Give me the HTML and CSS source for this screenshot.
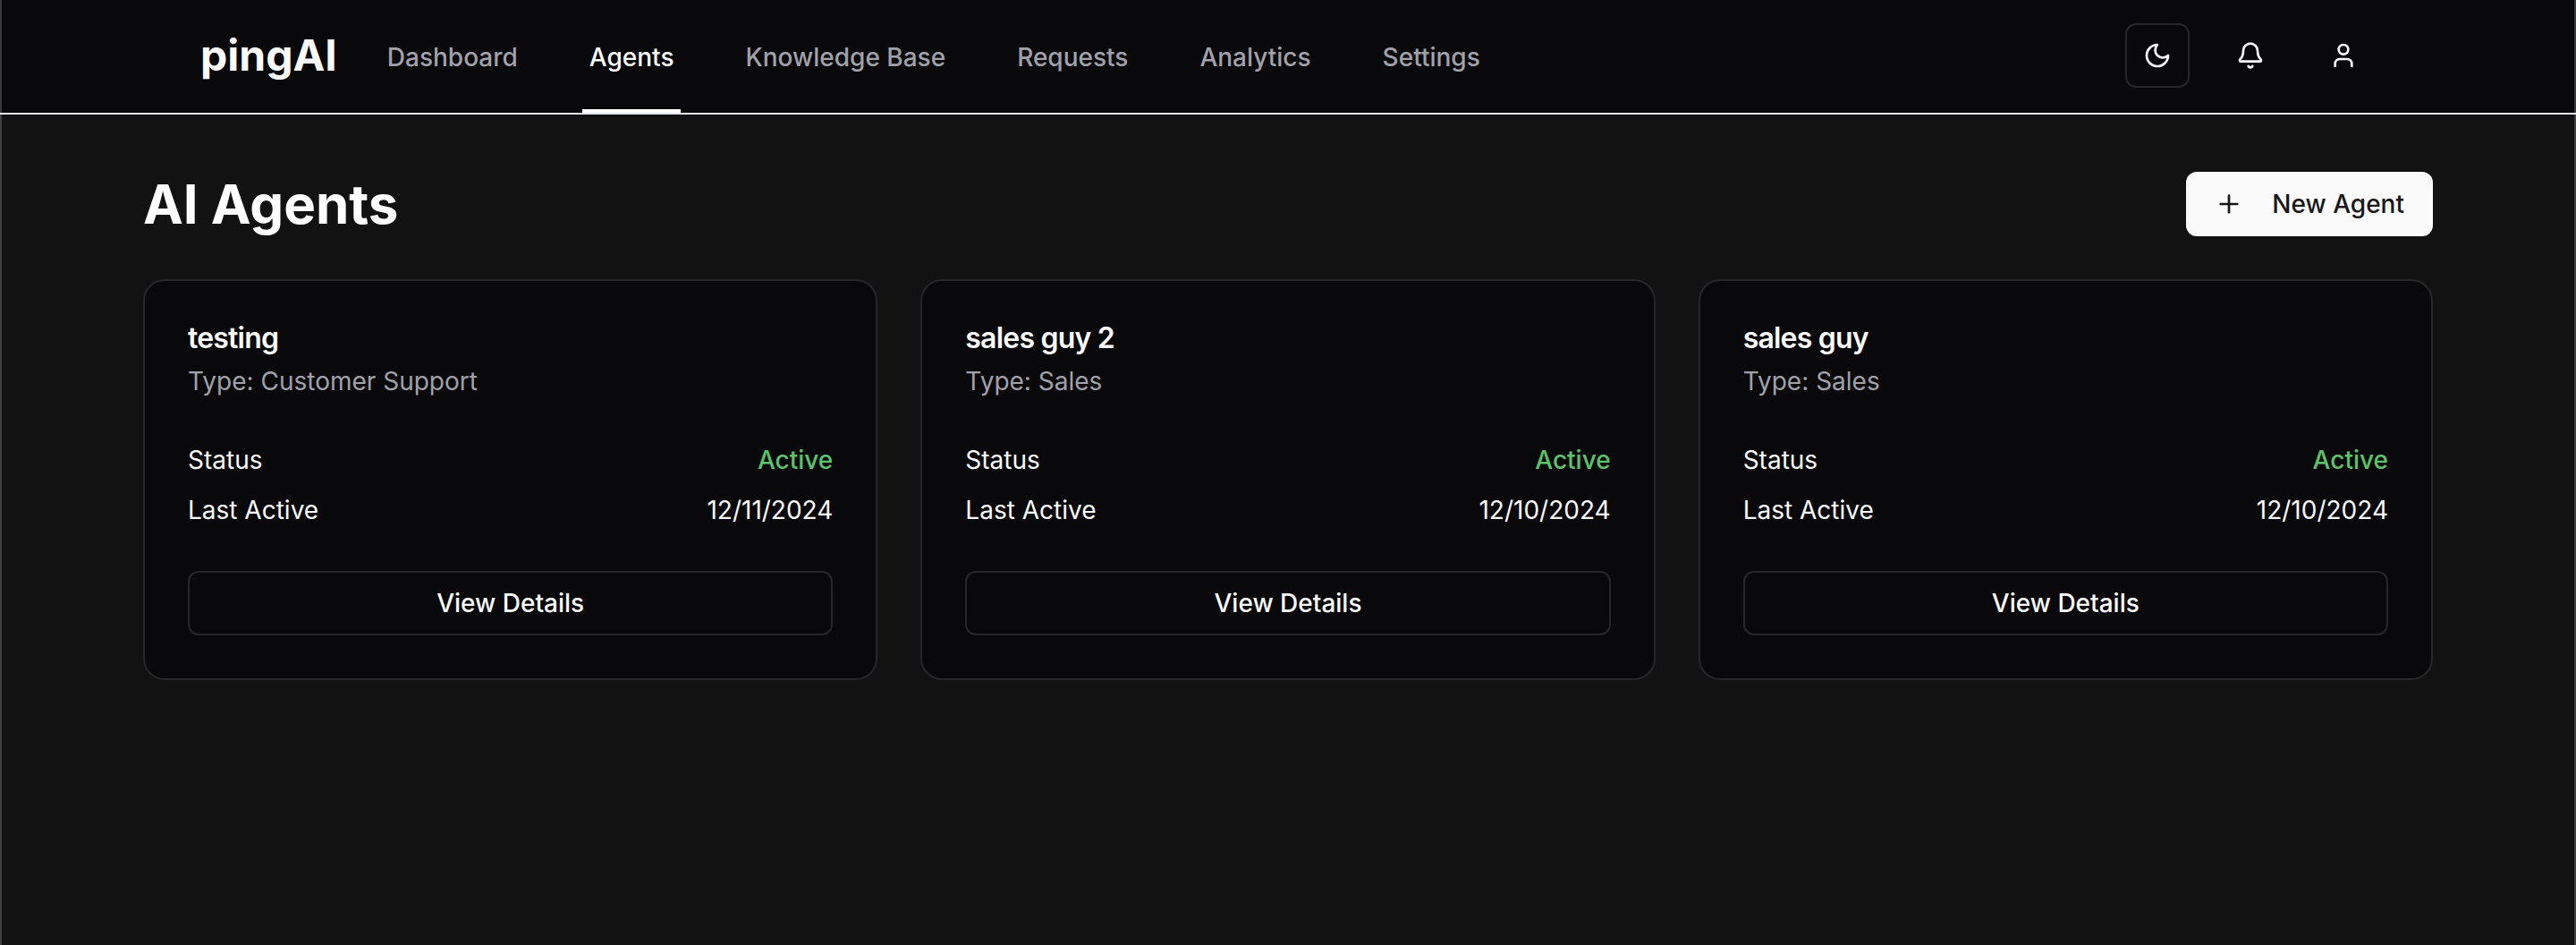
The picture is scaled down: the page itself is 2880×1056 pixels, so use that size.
FILE: index.html
```html
<!DOCTYPE html>
<html lang="en">
<head>
<meta charset="utf-8">
<meta name="viewport" content="width=device-width, initial-scale=1">
<title>AI Agents - pingAI</title>
<link rel="stylesheet" href="styles.css">
</head>
<body>
<header class="header">
  <div class="header-inner">
    <a class="logo" href="#">pingAI</a>
    <nav class="nav" aria-label="Main">
      <a class="nav-link" href="#">Dashboard</a>
      <a class="nav-link nav-link-active" href="#" aria-current="page">Agents</a>
      <a class="nav-link" href="#">Knowledge Base</a>
      <a class="nav-link" href="#">Requests</a>
      <a class="nav-link" href="#">Analytics</a>
      <a class="nav-link" href="#">Settings</a>
    </nav>
    <div class="actions">
      <button class="icon-button icon-button-outline" type="button" aria-label="Toggle theme">
        <svg class="icon" viewBox="0 0 24 24" aria-hidden="true"><path d="M12 3a6 6 0 0 0 9 9 9 9 0 1 1-9-9Z"/></svg>
      </button>
      <button class="icon-button" type="button" aria-label="Notifications">
        <svg class="icon" viewBox="0 0 24 24" aria-hidden="true"><path d="M10.268 21a2 2 0 0 0 3.464 0"/><path d="M3.262 15.326A1 1 0 0 0 4 17h16a1 1 0 0 0 .74-1.673C19.41 13.956 18 12.499 18 8A6 6 0 0 0 6 8c0 4.499-1.411 5.956-2.738 7.326"/></svg>
      </button>
      <button class="icon-button" type="button" aria-label="Account">
        <svg class="icon" viewBox="0 0 24 24" aria-hidden="true"><path d="M19 21v-2a4 4 0 0 0-4-4H9a4 4 0 0 0-4 4v2"/><circle cx="12" cy="7" r="4"/></svg>
      </button>
    </div>
  </div>
</header>
<main class="main">
  <div class="title-row">
    <h1 class="title">AI Agents</h1>
    <button class="button button-primary" type="button">
      <svg class="icon" viewBox="0 0 24 24" aria-hidden="true"><path d="M5 12h14"/><path d="M12 5v14"/></svg>
      New Agent
    </button>
  </div>
  <div class="cards">
    <article class="card">
      <h2 class="card-title">testing</h2>
      <p class="card-type">Type: Customer Support</p>
      <dl class="facts">
        <div class="fact"><dt>Status</dt><dd class="active">Active</dd></div>
        <div class="fact"><dt>Last Active</dt><dd>12/11/2024</dd></div>
      </dl>
      <button class="button button-outline" type="button">View Details</button>
    </article>
    <article class="card">
      <h2 class="card-title">sales guy 2</h2>
      <p class="card-type">Type: Sales</p>
      <dl class="facts">
        <div class="fact"><dt>Status</dt><dd class="active">Active</dd></div>
        <div class="fact"><dt>Last Active</dt><dd>12/10/2024</dd></div>
      </dl>
      <button class="button button-outline" type="button">View Details</button>
    </article>
    <article class="card">
      <h2 class="card-title">sales guy</h2>
      <p class="card-type">Type: Sales</p>
      <dl class="facts">
        <div class="fact"><dt>Status</dt><dd class="active">Active</dd></div>
        <div class="fact"><dt>Last Active</dt><dd>12/10/2024</dd></div>
      </dl>
      <button class="button button-outline" type="button">View Details</button>
    </article>
  </div>
</main>
</body>
</html>
```

FILE: styles.css
```css
* {
  box-sizing: border-box;
}

body {
  margin: 0;
  min-height: 100vh;
  background: #121212;
  box-shadow: inset 2px 0 #3f3f3f, inset -2px 0 #3f3f3f;
  color: #fafafa;
  font-family: Inter, "Liberation Sans", sans-serif;
  font-size: 28px;
  line-height: 40px;
}

h1,
h2,
p,
dl,
dd {
  margin: 0;
}

a {
  color: inherit;
  text-decoration: none;
}

button {
  font: inherit;
  color: inherit;
}

.header {
  background: #09090b;
  border-bottom: 2px solid #e5e7eb;
  box-shadow: inset 2px 0 #3a3a3c, inset -2px 0 #3a3a3c;
}

.header-inner {
  display: flex;
  align-items: center;
  height: 126px;
  max-width: 2560px;
  margin: 0 auto;
  padding: 0 64px 2px;
}

.logo {
  font-size: 48px;
  line-height: 64px;
  font-weight: 700;
}

.nav {
  display: flex;
  align-self: stretch;
  gap: 64px;
  margin: 0 0 -2px 48px;
}

.nav-link {
  display: flex;
  align-items: center;
  padding: 6px 8px 0;
  border-bottom: 4px solid transparent;
  color: #a1a1aa;
  font-weight: 500;
}

.nav-link-active {
  border-color: #ffffff;
  color: #fafafa;
}

.actions {
  display: flex;
  gap: 32px;
  margin-left: auto;
}

.icon-button {
  display: flex;
  align-items: center;
  justify-content: center;
  width: 72px;
  height: 72px;
  padding: 0;
  border: 0;
  border-radius: 12px;
  background: transparent;
}

.icon-button-outline {
  border: 2px solid #27272a;
}

.icon {
  width: 32px;
  height: 32px;
  fill: none;
  stroke: currentColor;
  stroke-width: 2;
  stroke-linecap: round;
  stroke-linejoin: round;
}

.main {
  max-width: 2560px;
  margin: 0 auto;
  padding: 64px 0;
}

.title-row {
  display: flex;
  align-items: center;
  justify-content: space-between;
  margin-bottom: 48px;
}

.title {
  font-size: 60px;
  line-height: 72px;
  font-weight: 700;
  color: #ffffff;
}

.button {
  display: flex;
  align-items: center;
  justify-content: center;
  height: 72px;
  padding: 0 32px;
  border: 0;
  border-radius: 12px;
  background: transparent;
  font-weight: 500;
}

.button-primary {
  gap: 32px;
  background: #fafafa;
  color: #18181b;
}

.button-outline {
  width: 100%;
  border: 2px solid #27272a;
}

.cards {
  display: grid;
  grid-template-columns: repeat(3, 1fr);
  gap: 48px;
}

.card {
  padding: 48px;
  border: 2px solid #27272a;
  border-radius: 24px;
  background: #09090b;
}

.card-title {
  font-size: 32px;
  line-height: 32px;
  font-weight: 600;
  letter-spacing: -0.025em;
}

.card-type {
  margin-top: 12px;
  color: #a1a1aa;
}

.facts {
  display: grid;
  gap: 16px;
  margin: 48px 0;
}

.fact {
  display: flex;
  justify-content: space-between;
}

.active {
  color: #5dc269;
  font-weight: 500;
}
```
